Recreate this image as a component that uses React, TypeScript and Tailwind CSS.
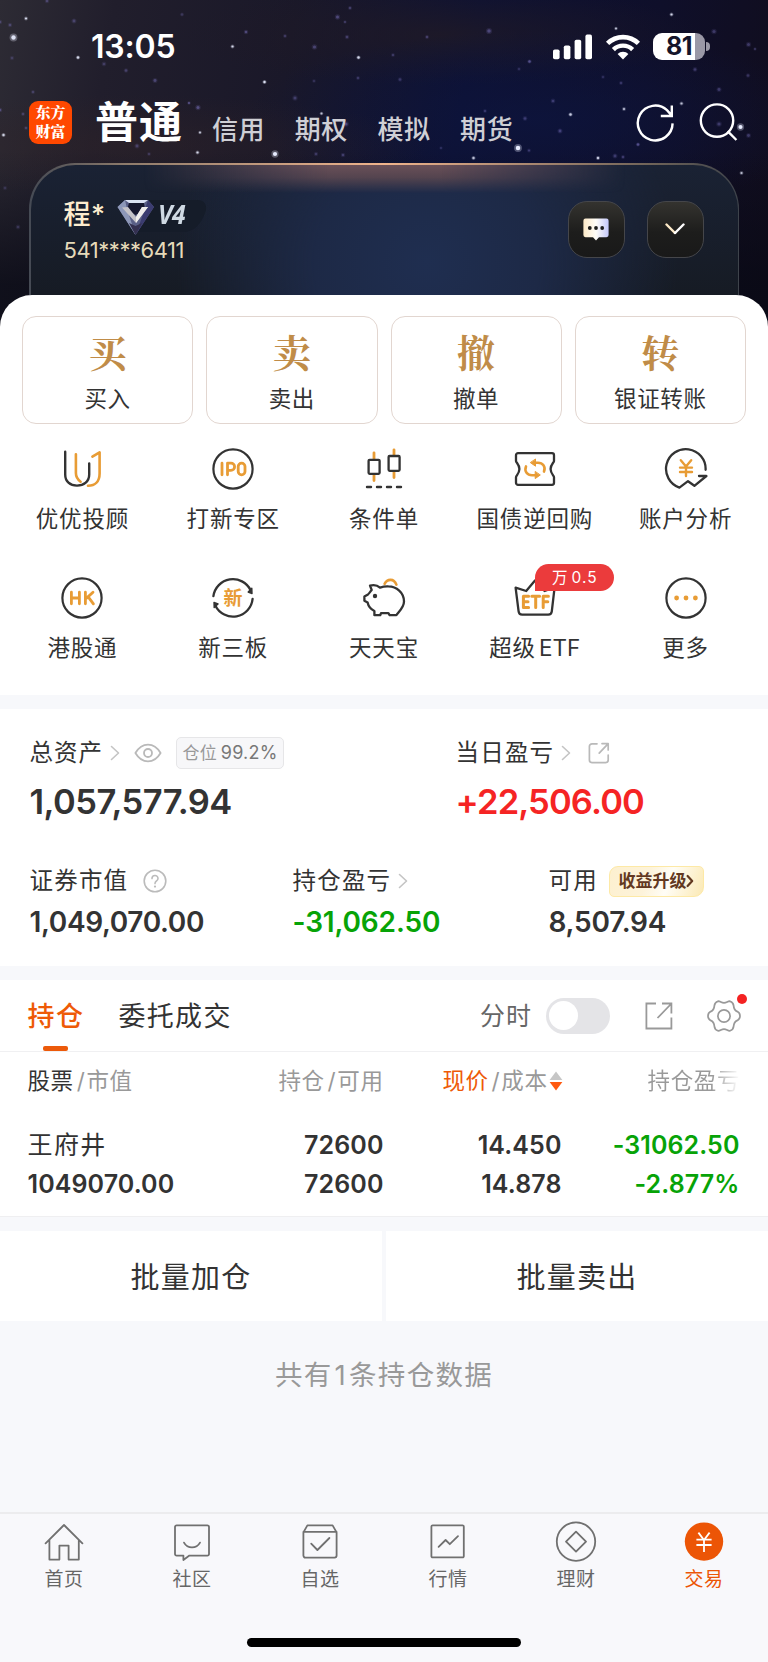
import type { ReactNode } from "react";

const DARK = "#333333";
const GOLD = "#e89c35";

const STARS: [number, number, number, number][] = [
  [13.5, 37.5, 2.8, 0.95], [26, 18.5, 1.4, 0.9], [10, 25, 1.6, 0.4], [0, 22, 1.6, 0.4], [74, 21, 1.8, 0.4], [47, 1, 1.6, 0.4],
  [78, 57.5, 1.5, 0.9], [12, 58, 1.6, 0.3], [104, 64, 1.7, 0.35], [126, 70.5, 1.6, 0.4], [155, 80.5, 1.8, 0.45], [33, 92, 1.5, 0.35],
  [3.5, 135, 1.5, 0.85], [0, 110, 1.6, 0.5], [23, 114, 1.5, 0.35], [26, 128, 1.4, 0.4], [182, 14.5, 1.5, 0.3], [232.5, 46.5, 1.4, 0.9],
  [246, 32, 1.6, 0.5], [285, 36, 1.5, 0.35], [314.5, 47, 2, 0.45], [337.5, 17, 1.9, 0.5], [345, 22, 1.3, 0.4], [350, 8, 1.5, 0.4],
  [347, 37, 1.6, 0.4], [358.5, 57.5, 1.5, 0.9], [264.5, 82, 1.5, 0.95], [358, 78, 1.5, 0.35], [295, 98, 1.9, 0.4], [314, 81, 1.4, 0.3],
  [198, 107.5, 1.9, 0.55], [189, 103, 1.3, 0.6], [200, 132.5, 1.3, 0.8], [197.5, 152.5, 1.4, 0.9], [275, 154, 2.6, 1], [321.5, 113.5, 1.3, 0.8],
  [316, 154, 1.6, 0.35], [343, 155, 1.6, 0.4], [137, 146, 1.8, 0.4], [149, 154, 1.4, 0.35], [346, 124, 2, 0.5], [5, 188, 1.6, 0.25],
  [18, 227, 1.7, 0.3], [489, 31, 2.2, 0.5], [427, 37, 1.5, 0.4], [393, 55, 1.4, 0.4], [529.5, 61.5, 1.5, 0.6], [519, 69, 1.4, 0.3],
  [400, 79.5, 1.6, 0.35], [671.5, 14.5, 1.4, 0.9], [616, 28.5, 1.3, 0.8], [714, 31.5, 2, 0.4], [748.5, 44.5, 1.9, 0.4], [755, 49, 1.2, 0.4],
  [695, 69.5, 1.7, 0.4], [748, 75.5, 1.6, 0.35], [719, 89.5, 1.8, 0.4], [621, 83, 1.5, 0.35], [603, 77, 1.4, 0.3], [553, 101, 1.7, 0.4],
  [624, 109, 1.4, 0.8], [570.5, 114.5, 1.5, 0.85], [560, 131, 1.8, 0.45], [525, 118.5, 1.7, 0.4], [485, 111, 1.4, 0.4], [681.5, 103.5, 1.4, 0.8],
  [740.5, 127, 2.6, 1], [748.5, 135.5, 1.8, 0.4], [719, 124, 2, 0.4], [638, 144.5, 1.5, 0.6], [518, 148, 2.8, 1], [529, 150.5, 1.4, 0.4],
  [473.5, 158, 1.5, 0.8], [598, 158, 1.5, 0.85], [615, 156, 1.8, 0.4], [623, 157, 1.5, 0.4], [741.5, 173, 1.4, 0.8], [441, 148, 1.3, 0.3],
];

function Svg({ w, h, children, className = "" }: { w: number; h: number; children: ReactNode; className?: string }) {
  return (
    <svg
      width={w}
      height={h}
      viewBox={`0 0 ${w} ${h}`}
      fill="none"
      strokeLinecap="round"
      strokeLinejoin="round"
      className={`shrink-0 ${className}`}
    >
      {children}
    </svg>
  );
}

function IconText({ children, size }: { children: ReactNode; size: number }) {
  return (
    <text
      x="22"
      y="22.4"
      textAnchor="middle"
      dominantBaseline="central"
      fill={GOLD}
      fontSize={size}
      fontWeight="700"
      className="font-[Inter,'Noto_Sans_CJK_SC',sans-serif]"
    >
      {children}
    </text>
  );
}

const ICONS: Record<string, ReactNode> = {
  advisor: (
    <Svg w={44} h={44}>
      <path d="M5.2 4.8V27.5C5.2 34.5 10 38.6 17 38.6S29.2 34.5 29.2 27.5V16.5" stroke={DARK} strokeWidth="2.4" />
      <path d="M15.9 7.2V26C15.9 30 17.5 32.5 20.6 34.7" stroke={GOLD} strokeWidth="2.6" />
      <path d="M32.4 9.6L39.6 5.3V26.5C39.6 34.5 35 38.8 28 38.8" stroke={GOLD} strokeWidth="2.6" />
    </Svg>
  ),
  ipo: (
    <Svg w={44} h={44}>
      <circle cx="22" cy="22" r="19.6" stroke={DARK} strokeWidth="2.2" />
      <path d="M11 16.2V27.8M16.5 27.8V16.2H20A3.6 3.6 0 0 1 20 23.4H16.5" stroke={GOLD} strokeWidth="2.8" />
      <rect x="27.2" y="16.2" width="6.8" height="11.6" rx="3.4" stroke={GOLD} strokeWidth="2.8" />
    </Svg>
  ),
  candles: (
    <Svg w={44} h={44}>
      <path d="M12 5.8V12M12 28V33.6M32 2.8V8M32 24.5V30.6" stroke={GOLD} strokeWidth="2.8" />
      <rect x="6.6" y="12.8" width="11" height="14" rx="1" stroke={DARK} strokeWidth="2.3" />
      <rect x="26.6" y="9" width="11" height="14.8" rx="1" stroke={DARK} strokeWidth="2.3" />
      <path d="M5 40H9M15 40H19M25 40H29M35 40H39" stroke={DARK} strokeWidth="2.4" />
    </Svg>
  ),
  bond: (
    <Svg w={44} h={44}>
      <path
        d="M5 6.2H39A2 2 0 0 1 41 8.2V14C41 15.6 37.6 17.5 37.6 22S41 28.6 41 30.2V35.8A2 2 0 0 1 39 37.8H5A2 2 0 0 1 3 35.8V30.2C3 28.6 6.4 26.5 6.4 22S3 15.6 3 14V8.2A2 2 0 0 1 5 6.2Z"
        stroke={DARK}
        strokeWidth="2.3"
      />
      <path d="M31 24.6C33 19.6 29.6 15.8 25 15.8H21" stroke={GOLD} strokeWidth="2.6" />
      <path d="M13 19.4C11 24.4 14.4 28.2 19 28.2H23" stroke={GOLD} strokeWidth="2.6" />
      <path d="M22.5 12.4V19.2L17.6 15.8ZM22.2 24.8V31.6L27 28.2Z" fill={GOLD} stroke={GOLD} strokeWidth="1" />
    </Svg>
  ),
  analysis: (
    <Svg w={44} h={44}>
      <path d="M41.6 22.8A19.8 19.8 0 1 0 15.4 40.6L24 34.2L30.4 38.8L42.4 29H35" stroke={DARK} strokeWidth="2.3" />
      <path d="M16.8 13.2L22 19.4L27.2 13.2M16 20.6H28M16 25H28M22 19.8V29" stroke={GOLD} strokeWidth="2.4" />
    </Svg>
  ),
  hk: (
    <Svg w={44} h={44}>
      <circle cx="22" cy="22" r="19.6" stroke={DARK} strokeWidth="2.2" />
      <path d="M11.4 16.2V27.8M19.4 16.2V27.8M11.4 22H19.4M25.4 16.2V27.8M33 16.2L26 22.6M28.2 20.8L33.4 27.8" stroke={GOLD} strokeWidth="2.8" />
    </Svg>
  ),
  board: (
    <Svg w={44} h={44}>
      <path d="M2.4 20.2A19.7 19.7 0 0 1 39.6 14.2M41.6 22.8A19.7 19.7 0 0 1 4.4 29.8" stroke={DARK} strokeWidth="2.3" />
      <path d="M40.8 12.2L41 17.6L37.2 16ZM3.2 31.6L3 26.4L7 28Z" fill={DARK} stroke={DARK} strokeWidth="1.4" />
      <IconText size={19}>新</IconText>
    </Svg>
  ),
  piggy: (
    <Svg w={44} h={44}>
      <path d="M22.6 7.8C25 3 31.8 1.8 34.4 8.6" stroke={GOLD} strokeWidth="2.6" />
      <path
        d="M8 9.6L9.7 14C8.4 15.4 7 17.6 6 18.4L2.4 20.6V24.8L5.6 26.6C6.4 30.6 9 33.4 12.4 35V39.2H18.2L19 37.2H26.4L27.6 39.2H34.4C37 35.6 42 31.4 42 25.6C42 16.4 34.4 10.6 26.4 10.4C23 10.2 20.4 10.8 18 11.6C15.4 9.2 11.4 8.6 8 9.6Z"
        stroke={DARK}
        strokeWidth="2.3"
      />
      <circle cx="13" cy="20" r="2.2" fill={DARK} />
    </Svg>
  ),
  etf: (
    <Svg w={44} h={44}>
      <path d="M2.6 11.6L13.2 15L22 4.4L31.6 15L41.6 11.4L38.8 35.4A3.6 3.6 0 0 1 35.2 38.6H9.2A3.6 3.6 0 0 1 5.6 35.4L2.6 11.6Z" stroke={DARK} strokeWidth="2.3" />
      <path d="M15.6 20.2H10.4V31.4H15.6M10.4 25.8H15M18.8 20.2H26.6M22.7 20.2V31.4M30.2 31.4V20.2H35.4M30.2 25.8H34.8" stroke={GOLD} strokeWidth="3" />
    </Svg>
  ),
  more: (
    <Svg w={44} h={44}>
      <circle cx="22" cy="22" r="19.6" stroke={DARK} strokeWidth="2.2" />
      <g fill={GOLD}>
        <circle cx="12.6" cy="22" r="2.4" />
        <circle cx="22" cy="22" r="2.4" />
        <circle cx="31.4" cy="22" r="2.4" />
      </g>
    </Svg>
  ),
};

const SHORTCUTS = [
  ["advisor", "优优投顾"], ["ipo", "打新专区"], ["candles", "条件单"], ["bond", "国债逆回购"], ["analysis", "账户分析"],
  ["hk", "港股通"], ["board", "新三板"], ["piggy", "天天宝"], ["etf", "超级ETF"], ["more", "更多"],
];

const ACTIONS = [["买", "买入"], ["卖", "卖出"], ["撤", "撤单"], ["转", "银证转账"]];

function Chevron() {
  return (
    <Svg w={10} h={18}>
      <path d="M1.5 2.5L8.5 9L1.5 15.5" stroke="#c4c4c4" strokeWidth="1.6" />
    </Svg>
  );
}

function Header() {
  return (
    <header className="relative h-[295px]">
      <div className="absolute inset-x-0 top-0 h-[335px] overflow-hidden bg-[linear-gradient(100deg,#2d2b34_0%,#211e2c_14%,#1a1829_36%,#0d1133_58%,#0f0f2a_80%,#110d1c_100%)]">
        <div className="absolute inset-0 bg-[linear-gradient(180deg,transparent_0%,transparent_45%,rgba(8,9,20,0.75)_85%)]" />
        <div className="absolute inset-0 bg-[radial-gradient(300px_50px_at_130px_145px,rgba(50,36,38,0.45),transparent),radial-gradient(300px_90px_at_540px_120px,rgba(13,22,66,0.6),transparent),radial-gradient(260px_50px_at_440px_35px,rgba(32,26,38,0.8),transparent)]" />
        <svg width="768" height="335" viewBox="0 0 768 335" className="absolute inset-0">
          {STARS.map(([x, y, r, o], i) => (
            <g key={i} fill={o > 0.6 ? "#e8ecff" : "#8078c8"} opacity={o}>
              <circle cx={x} cy={y} r={r * 1.4} opacity="0.3" />
              <circle cx={x} cy={y} r={r * 0.8} />
            </g>
          ))}
        </svg>
      </div>

      <div className="relative flex h-[93px] items-center pl-[91px] pr-[58px] text-white">
        <span className="text-[32px] font-semibold tracking-[-0.2px]">13:05</span>
        <div className="ml-auto flex items-center">
          <Svg w={40} h={26}>
            <g fill="#fff">
              <rect x="0" y="15.5" width="6.6" height="9.8" rx="1.8" />
              <rect x="10.8" y="11.5" width="6.6" height="13.8" rx="1.8" />
              <rect x="21.6" y="5.7" width="6.6" height="19.6" rx="1.8" />
              <rect x="32.4" y="0.6" width="6.6" height="24.7" rx="1.8" />
            </g>
          </Svg>
          <svg width="36" height="28" viewBox="0 0 36 28" fill="none" className="ml-[12px] shrink-0">
            <path d="M2.6 10.4A22 22 0 0 1 33.4 10.4" stroke="#fff" strokeWidth="4.6" />
            <path d="M8.4 16.6A13.6 13.6 0 0 1 27.6 16.6" stroke="#fff" strokeWidth="4.4" />
            <path d="M18 26.4L12.6 21A7.6 7.6 0 0 1 23.4 21Z" fill="#fff" />
          </svg>
          <div className="ml-[12px] flex h-[27px] w-[52px] items-center justify-center rounded-[9px] bg-[linear-gradient(90deg,#fff_0%,#fff_81%,#9a98a6_81%)] text-[25px] font-bold tracking-[-0.6px] text-[#15142a]">
            81
          </div>
          <div className="ml-[1px] h-[9px] w-[4px] rounded-r-full bg-[#9a98a6]" />
        </div>
      </div>

      <div className="relative flex h-[59px] items-center pl-[29px] pr-[29px]">
        <div className="flex size-[43px] flex-col items-center justify-center rounded-[9px] bg-[#ff4800] text-[15px] leading-[18.5px] font-black text-white font-[Inter,'Noto_Serif_CJK_SC','Noto_Sans_CJK_SC',serif]">
          <span>东方</span>
          <span>财富</span>
        </div>
        <nav className="flex items-center">
          <span className="ml-[23px] text-[43px] font-bold tracking-[1px] text-white">普通</span>
          <div className="ml-[29px] flex gap-[29.5px] pt-[13px] text-[26px] tracking-[0.6px] font-medium text-[#cfcfd5]">
            <span>信用</span>
            <span>期权</span>
            <span>模拟</span>
            <span>期货</span>
          </div>
        </nav>
        <div className="ml-auto flex items-center gap-[23px]">
          <svg width="40" height="40" viewBox="0 0 40 40" fill="none" stroke="#fff" strokeWidth="2.4" className="shrink-0">
            <path d="M36.6 20.4A17.4 17.4 0 1 1 31 7.2L35.6 12.4M35.8 2.6V13H24.8" />
          </svg>
          <svg width="40" height="40" viewBox="0 0 40 40" fill="none" stroke="#fff" strokeWidth="2.4" className="shrink-0">
            <circle cx="18" cy="17.6" r="16.2" />
            <path d="M28.6 28.2L37.4 37" />
          </svg>
        </div>
      </div>

      <div className="relative mx-[29px] mt-[11px] h-[132px] rounded-t-[46px] bg-[linear-gradient(90deg,#454a54_0%,#8f7c6c_14%,#f0b48c_50%,#6d6258_88%,#3e434b_100%)] p-[1.5px] pb-0">
        <div className="relative flex h-full items-start justify-between overflow-hidden rounded-t-[44.5px] bg-[radial-gradient(250px_240px_at_56%_75%,#1f2e50_0%,#1d2946_45%,transparent_100%),linear-gradient(180deg,#1a2234,#161b24)] pl-[33px] pr-[34px]">
          <div className="absolute inset-x-0 top-0 h-[28px] bg-[linear-gradient(180deg,#6a5058_0%,#54444f_45%,transparent_100%)] [mask-image:linear-gradient(90deg,transparent_16%,black_42%,black_58%,transparent_84%)]" />
          <div className="pt-[33px]">
            <div className="flex h-[36px] items-center">
              <span className="text-[27px] font-medium tracking-[0.5px] text-[#fdeccf]">程*</span>
              <div className="relative ml-[12px] flex h-[34px] w-[90px] items-center">
                <svg width="90" height="40" viewBox="0 0 90 40" fill="none" className="absolute -top-px -left-px">
                  <path d="M14 2H80C88 2 91 8 88 15C84 26 77 34 66 34H14Z" fill="#151c29" />
                  <path d="M8 2H31L37 9L18.5 37L0.5 9Z" fill="#5a5f86" />
                  <path d="M8 2L0.5 9L18.5 37L10 11Z" fill="#8d97b8" />
                  <path d="M31 2L37 9L18.5 37L28 11Z" fill="#3b3c70" />
                  <path d="M8 2L12 5H27L31 2Z" fill="#d9e0f2" />
                  <path d="M12 5H27L28 12L18.5 17L10 12Z" fill="#15162e" />
                  <path d="M12 25L18.5 37L25 25L18.5 28Z" fill="#34304f" />
                  <path d="M5 9.5L11 9L19 19L25 9H31L19 25Z" fill="#c4c2c8" />
                  <path d="M19 25L31 9H25L19 19Z" fill="#efedec" />
                </svg>
                <span className="relative -top-px ml-[40px] text-[26px] font-bold tracking-[-0.5px] text-[#cfd9e3] italic font-['Open_Sans'] scale-x-95 origin-left">V4</span>
              </div>
            </div>
            <div className="mt-[2px] h-[28px] text-[22px] leading-[28px] tracking-[-0.45px] text-[#e6dab9]">541****6411</div>
          </div>
          <div className="flex gap-[22px] pt-[36px]">
            <div className="flex size-[57px] items-center justify-center rounded-[19px] border border-[#45464a] bg-[linear-gradient(180deg,#34332f,#1d1d1c_55%,#191919)]">
              <svg width="26" height="23" viewBox="0 0 26 23" className="shrink-0">
                <defs>
                  <linearGradient id="bubble">
                    <stop offset="0" stopColor="#fdeac8" />
                    <stop offset="0.5" stopColor="#fffdf8" />
                    <stop offset="1" stopColor="#c4c8fa" />
                  </linearGradient>
                </defs>
                <path d="M2.5 0.5H23.5A2.2 2.2 0 0 1 25.6 2.7V17A2.2 2.2 0 0 1 23.5 19.2H16L13 22.4L10 19.2H2.5A2.2 2.2 0 0 1 0.4 17V2.7A2.2 2.2 0 0 1 2.5 0.5Z" fill="url(#bubble)" />
                <g fill="#1d1d1c">
                  <circle cx="6.8" cy="10" r="1.9" />
                  <circle cx="13" cy="10" r="1.9" />
                  <circle cx="19.2" cy="10" r="1.9" />
                </g>
              </svg>
            </div>
            <div className="flex size-[57px] items-center justify-center rounded-[19px] border border-[#45464a] bg-[linear-gradient(180deg,#34332f,#1d1d1c_55%,#191919)]">
              <Svg w={20} h={12}>
                <path d="M1.5 1.5L10 10" stroke="#fdeac8" strokeWidth="2.4" />
                <path d="M10 10L18.5 1.5" stroke="#fff" strokeWidth="2.4" />
              </Svg>
            </div>
          </div>
        </div>
      </div>
    </header>
  );
}

function Actions() {
  return (
    <section className="relative h-[400px] rounded-t-[32px] bg-white pt-[21px]">
      <div className="grid grid-cols-4 gap-[13px] px-[22px]">
        {ACTIONS.map(([big, label]) => (
          <div key={label} className="flex h-[108px] flex-col items-center rounded-[14px] border border-[#e2d6d0] pt-[13px]">
            <span className="h-[42px] text-[38px] leading-[42px] font-bold text-[#c08c48] font-['Noto_Serif_CJK_SC','Noto_Serif_SC',Inter,'Noto_Sans_CJK_SC',serif]">{big}</span>
            <span className="mt-[12px] h-[30px] text-[22.5px] leading-[30px] tracking-[0.7px]">{label}</span>
          </div>
        ))}
      </div>
      <div className="grid grid-cols-5 gap-y-[42px] px-[7px] pt-[23px]">
        {SHORTCUTS.map(([icon, label]) => (
          <div key={label} className="relative flex flex-col items-center">
            {ICONS[icon]}
            <span className="mt-[13px] h-[30px] text-[22.5px] leading-[30px] tracking-[0.8px] whitespace-nowrap">
              {icon === "etf" ? (
                <>
                  超级<span className="ml-[3px] tracking-[0px]">ETF</span>
                </>
              ) : (
                label
              )}
            </span>
            {icon === "etf" && (
              <span className="absolute -top-[12px] left-[76px] flex h-[27px] w-[79px] items-center justify-center rounded-[13.5px] rounded-bl-none bg-[#eb3b3c] text-[15.5px] tracking-[1px] text-white">
                万<span className="ml-[3px]">0.5</span>
              </span>
            )}
          </div>
        ))}
      </div>
    </section>
  );
}

function Assets() {
  return (
    <section className="h-[257px] bg-white pt-[29px]">
      <div className="flex pl-[29.5px]">
        <div className="w-[426px]">
          <div className="flex h-[30px] items-center text-[23.5px] leading-[30px] tracking-[1px]">
            总资产
            <span className="ml-[7px] flex"><Chevron /></span>
            <Svg w={28} h={20} className="ml-[14px]">
              <path d="M1.4 10C4.6 4.6 9 1.6 14 1.6S23.4 4.6 26.6 10C23.4 15.4 19 18.4 14 18.4S4.6 15.4 1.4 10Z" stroke="#b9b9b9" strokeWidth="1.8" />
              <circle cx="14" cy="10" r="4" stroke="#b9b9b9" strokeWidth="1.8" />
            </Svg>
            <span className="ml-[14px] flex h-[32px] w-[108px] shrink-0 items-center justify-center rounded-[5px] border border-[#e6e6e8] bg-[#f7f7f9] text-[17px] tracking-[0.2px] whitespace-nowrap text-[#999]">
              仓位<span className="ml-[4px] text-[18px] text-[#777]">99.2%</span>
            </span>
          </div>
          <div className="mt-[14px] h-[40px] text-[34.5px] leading-[40px] font-semibold tracking-[-0.55px]">1,057,577.94</div>
        </div>
        <div>
          <div className="flex h-[30px] items-center text-[23.5px] leading-[30px] tracking-[1.2px]">
            当日盈亏
            <span className="ml-[7px] flex"><Chevron /></span>
            <Svg w={22} h={22} className="ml-[17px]">
              <path d="M9 1.8H4A2.6 2.6 0 0 0 1.4 4.4V18A2.6 2.6 0 0 0 4 20.6H17.6A2.6 2.6 0 0 0 20.2 18V13" stroke="#b9b9b9" strokeWidth="1.7" />
              <path d="M11.2 11.2L20 1.8M14 1.6H20.2V8" stroke="#b9b9b9" strokeWidth="1.7" />
            </Svg>
          </div>
          <div className="mt-[14px] h-[40px] text-[34.5px] leading-[40px] font-semibold tracking-[-0.85px] text-[#f52424]">+22,506.00</div>
        </div>
      </div>
      <div className="mt-[43px] flex pl-[29.5px]">
        {[
          { label: "证券市值", value: "1,049,070.00", w: "w-[263px]", color: "tracking-[-0.35px]" },
          { label: "持仓盈亏", value: "-31,062.50", w: "w-[256px]", color: "tracking-[-0.15px] text-[#07a307]" },
          { label: "可用", value: "8,507.94", w: "", color: "tracking-[-0.2px]" },
        ].map((c, i) => (
          <div key={c.label} className={c.w}>
            <div className="flex h-[32px] items-center text-[23.5px] leading-[32px] tracking-[1.2px]">
              {c.label}
              {i === 0 && (
                <Svg w={24} h={24} className="ml-[15px]">
                  <circle cx="12" cy="12" r="10.8" stroke="#bbb" strokeWidth="1.6" />
                  <path d="M9 9.6C9 5.4 15 5.6 15 9.4C15 12 12 11.8 12 14.6" stroke="#bbb" strokeWidth="1.6" />
                  <circle cx="12" cy="17.6" r="1.1" fill="#bbb" />
                </Svg>
              )}
              {i === 1 && <span className="ml-[7px] flex"><Chevron /></span>}
              {i === 2 && (
                <span className="ml-[11px] flex h-[31px] w-[95px] items-center justify-center rounded-[9px_5px_10px_5px] border-[1.5px] border-[#fde9a6] bg-[linear-gradient(110deg,#fdf0cf_0%,#fdf3da_40%,#fffdf6_62%,#fbe9b4_100%)] text-[17px] font-bold tracking-[0px] text-[#63391f]">
                  收益升级
                  <Svg w={8} h={14}>
                    <path d="M1.6 2L6.2 7L1.6 12" stroke="#63391f" strokeWidth="2.2" />
                  </Svg>
                </span>
              )}
            </div>
            <div className={`mt-[8px] h-[34px] text-[28px] leading-[34px] font-semibold ${c.color}`}>{c.value}</div>
          </div>
        ))}
      </div>
    </section>
  );
}

function Holdings() {
  return (
    <section className="h-[236px] bg-white">
      <div className="relative flex h-[72px] items-center border-b border-[#f0f0f2] pl-[27.5px] pr-[27px]">
        <div className="relative flex h-full items-center pt-[3px] text-[27px] font-medium tracking-[1.5px] text-[#ee5a07]">
          持仓
          <span className="absolute bottom-0 left-[15px] h-[5px] w-[25px] rounded-[2px] bg-[#ec5a0a]" />
        </div>
        <span className="ml-[34px] pt-[3px] text-[27px] tracking-[1.3px]">委托成交</span>
        <span className="ml-auto pt-[2px] text-[25px] tracking-[1px] text-[#666]">分时</span>
        <span className="ml-[14px] flex h-[36px] w-[64px] items-center rounded-full bg-[#e4e4e7] pl-[3px]">
          <span className="size-[29px] rounded-full bg-white" />
        </span>
        <svg width="28" height="28" viewBox="0 0 28 28" fill="none" stroke="#999" strokeWidth="1.8" className="ml-[35px] shrink-0">
          <path d="M11 1.5H1.4V26.5H26.4V15.5M12.5 16L26 2M17 1.5H26.4V11.5" />
        </svg>
        <div className="relative ml-[34px]">
          <Svg w={34} h={34}>
            <path
              d="M11 2.2C13.4 2 14.2 3.9 17 3.9S20.6 2 23 2.2C25.4 3 26.4 4.4 26.6 6.6C26.8 9.8 28 11.6 30.4 12.6C32.4 13.6 33 15 33 17S32.4 20.4 30.4 21.4C28 22.4 26.8 24.2 26.6 27.4C26.4 29.6 25.4 31 23 31.8C20.6 32 19.8 30.1 17 30.1S13.4 32 11 31.8C8.6 31 7.6 29.6 7.4 27.4C7.2 24.2 6 22.4 3.6 21.4C1.6 20.4 1 19 1 17S1.6 13.6 3.6 12.6C6 11.6 7.2 9.8 7.4 6.6C7.6 4.4 8.6 3 11 2.2Z"
              stroke="#999"
              strokeWidth="1.7"
            />
            <circle cx="17" cy="17" r="6.1" stroke="#999" strokeWidth="1.7" />
          </Svg>
          <span className="absolute -top-[5px] left-[29.5px] size-[10.5px] rounded-full bg-[#f42222]" />
        </div>
      </div>

      <div className="grid h-[57px] grid-cols-[200px_156px_179px_1fr] items-center pl-[27.5px] pr-[28px] text-[22.5px] tracking-[0.6px] text-[#999]">
        <span><span className="text-[#333]">股票</span><span className="ml-[3px] mr-px">/</span>市值</span>
        <span className="text-right"><span>持仓</span><span className="ml-[3px] mr-px">/</span>可用</span>
        <span className="flex items-center justify-end">
          <span className="text-[#ee5a07]">现价</span><span className="ml-[3px] mr-px">/</span>成本
          <svg width="14" height="20" viewBox="0 0 14 20" className="ml-px shrink-0">
            <path d="M7 0.5L13.4 9H0.6Z" fill="#c6c6c6" />
            <path d="M7 19.5L13.4 11H0.6Z" fill="#ff5a10" />
          </svg>
        </span>
        <span className="overflow-hidden bg-[linear-gradient(90deg,#999_84%,#fff_100%)] bg-clip-text text-right whitespace-nowrap text-transparent">持仓盈亏</span>
      </div>

      <div className="grid grid-cols-[200px_156px_178px_1fr] pl-[27.5px] pr-[28.5px] pt-[17px] text-right text-[25px] leading-[39px] font-semibold tracking-[0.1px]">
        <span className="text-left font-normal tracking-[1.4px]">王府井</span>
        <span>72600</span>
        <span>14.450</span>
        <span className="text-[#07a307]">-31062.50</span>
        <span className="text-left">1049070.00</span>
        <span>72600</span>
        <span>14.878</span>
        <span className="text-[#07a307]">-2.877%</span>
      </div>
    </section>
  );
}

const TABS: [string, ReactNode][] = [
  ["首页", <path key="p" d="M1.6 20.4L20 2L38.4 20.4M5.4 17V36.6H15.4V22.6H24.6V36.6H34.8V17" />],
  ["社区", <path key="p" d="M4.6 2.4H35.4A1.6 1.6 0 0 1 37 4V31A1.6 1.6 0 0 1 35.4 32.6H17.4L11.4 37V32.6H4.6A1.6 1.6 0 0 1 3 31V4A1.6 1.6 0 0 1 4.6 2.4ZM12 19.6C15.6 26 24.4 26 28 19.6" />],
  ["自选", <path key="p" d="M3.4 9.4L7.4 2.4H32.6L36.6 9.4V32.6A2 2 0 0 1 34.6 34.6H5.4A2 2 0 0 1 3.4 32.6ZM3.4 8.8H36.6M11.2 20.6L17.4 27L29.4 15" />],
  ["行情", <path key="p" d="M4.6 2.4H34.6A1.2 1.2 0 0 1 35.8 3.6V33.2A1.2 1.2 0 0 1 34.6 34.4H4.6A1.2 1.2 0 0 1 3.4 33.2V3.6A1.2 1.2 0 0 1 4.6 2.4ZM10.6 23.8L17.6 17L21.8 21.2L30 13.2" />],
  ["理财", <path key="p" d="M20 -0.6A19.2 19.2 0 1 1 20 37.8A19.2 19.2 0 1 1 20 -0.6ZM20 8.6L30 18.6L20 28.6L10 18.6Z" />],
];

export default function App() {
  return (
    <div className="min-h-[1662px] w-[768px] overflow-hidden bg-[#f7f8fb] text-[#333] font-[Inter,'Noto_Sans_CJK_SC',sans-serif]">
      <Header />
      <Actions />
      <div className="h-[14px]" />
      <Assets />
      <div className="h-[14px]" />
      <Holdings />
      <div className="h-[15px] border-t border-[#efeff1]" />
      <div className="grid h-[90px] grid-cols-2 gap-[4px] text-[29px] tracking-[1.2px]">
        <div className="flex items-center justify-center bg-white pt-[3px]">批量加仓</div>
        <div className="flex items-center justify-center bg-white pt-[3px]">批量卖出</div>
      </div>
      <div className="flex h-[191px] items-start justify-center pt-[36px] text-[27.5px] leading-[36px] tracking-[1.3px] text-[#999]">
        共有<span className="mx-[2px]">1</span>条持仓数据
      </div>
      <footer className="h-[150px] border-t-2 border-[#ececee] bg-[#f8f8fb] pt-[9px]">
        <div className="grid grid-cols-6 text-[19px] leading-[26px] tracking-[0.6px] text-[#666]">
          {TABS.map(([label, path]) => (
            <div key={label} className="flex flex-col items-center">
              <svg width="40" height="40" viewBox="0 0 40 40" fill="none" stroke="#707070" strokeWidth="1.8" strokeLinejoin="round" strokeLinecap="round" overflow="visible">
                {path}
              </svg>
              <span className="mt-[4px]">{label}</span>
            </div>
          ))}
          <div className="flex flex-col items-center text-[#ec5506]">
            <svg width="40" height="40" viewBox="0 0 40 40" fill="none" overflow="visible">
              <circle cx="20" cy="18.6" r="19.2" fill="#ec5506" />
              <path d="M14.4 9.6L20 17L25.6 9.6M12.4 16.6H27.6M12.4 22H27.6M20 16.6V29" stroke="#fff" strokeWidth="1.8" />
            </svg>
            <span className="mt-[4px]">交易</span>
          </div>
        </div>
        <div className="mx-auto mt-[45px] h-[9px] w-[274px] rounded-full bg-black" />
      </footer>
    </div>
  );
}
